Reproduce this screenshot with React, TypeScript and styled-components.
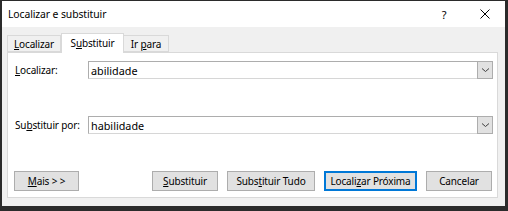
import styled, { createGlobalStyle } from 'styled-components';

const GlobalStyle = createGlobalStyle`
    html, body {
        margin: 0;
        padding: 0;
        background: #2b2b2b;
    }
    * {
        box-sizing: border-box;
    }
`;

const Dialog = styled.div`
    width: 508px;
    height: 211px;
    display: flex;
    flex-direction: column;
    border-style: solid;
    border-color: #2b2b2b;
    border-width: 1px 3px 5px 2px;
    font-family: "Noto Sans", "Open Sans", sans-serif;
    font-size: 10px;
    letter-spacing: -0.15px;
    color: #000;
`;

const TitleBar = styled.div`
    height: 26px;
    background: #fff;
    display: flex;
    align-items: center;
    padding-left: 6px;
`;

const Title = styled.div`
    flex: 1;
    font-size: 10.4px;
    letter-spacing: -0.1px;
`;

const TitleButton = styled.div<{ $width: number }>`
    width: ${p => p.$width}px;
    height: 26px;
    display: flex;
    align-items: center;
    justify-content: center;
    font-size: 11px;
`;

const Body = styled.div`
    flex: 1;
    background: #f0f0f0;
    padding: 6px 7px 8px 5px;
    display: flex;
    flex-direction: column;
`;

const TabRow = styled.div`
    display: flex;
    align-items: flex-end;
    height: 19px;
    position: relative;
    z-index: 1;
`;

const Tab = styled.div<{ $width: number; $active?: boolean; $noLeft?: boolean }>`
    width: ${p => p.$width}px;
    height: ${p => (p.$active ? 20 : 17)}px;
    margin-bottom: ${p => (p.$active ? -1 : 0)}px;
    background: ${p => (p.$active ? '#fff' : '#f0f0f0')};
    border: 1px solid #d9d9d9;
    border-bottom: ${p => (p.$active ? 'none' : '1px solid #d9d9d9')};
    border-left-width: ${p => (p.$noLeft ? 0 : 1)}px;
    display: flex;
    align-items: center;
    justify-content: center;
    padding-bottom: ${p => (p.$active ? 2 : 0)}px;
    white-space: pre;
`;

const Panel = styled.div`
    flex: 1;
    background: #fff;
    border: 1px solid #d9d9d9;
    padding: 8px 4px 6px 6px;
    display: flex;
    flex-direction: column;
`;

const FieldRow = styled.div<{ $top: number }>`
    display: flex;
    align-items: center;
    margin-top: ${p => p.$top}px;
`;

const Label = styled.div`
    width: 74px;
    padding-left: 1px;
    white-space: pre;
`;

const Combo = styled.div`
    flex: 1;
    height: 18px;
    display: flex;
    border: 1px solid #adadad;
    border-bottom-color: #d6d6d6;
    background: #fff;
`;

const ComboText = styled.div`
    flex: 1;
    display: flex;
    align-items: center;
    padding-left: 2px;
    font-size: 10.8px;
    letter-spacing: 0;
`;

const ComboButton = styled.div`
    width: 16px;
    margin: -1px -1px -1px 0;
    background: #e1e1e1;
    border: 1px solid #adadad;
    display: flex;
    align-items: center;
    justify-content: center;
`;

const ButtonRow = styled.div`
    margin-top: auto;
    margin-right: 1px;
    display: flex;
    gap: 9px;
`;

const Spacer = styled.div`
    flex: 1;
`;

const Button = styled.div<{ $width: number; $focus?: boolean }>`
    width: ${p => p.$width}px;
    height: 20px;
    background: #e1e1e1;
    border: ${p => (p.$focus ? '2px solid #0078d7' : '1px solid #adadad')};
    display: flex;
    align-items: center;
    justify-content: center;
    white-space: pre;
`;

const U = styled.u`
    text-decoration-thickness: 1px;
    text-underline-offset: 1px;
`;

const Chevron = () => (
    <svg width="9" height="6" viewBox="0 0 9 6">
        <polyline points="1,1.5 4.5,4.5 8,1.5" fill="none" stroke="#404040" strokeWidth="1" />
    </svg>
);

const CloseIcon = () => (
    <svg width="10" height="10" viewBox="0 0 10 10">
        <path d="M0.5 0.5 L9.5 9.5 M9.5 0.5 L0.5 9.5" stroke="#000" strokeWidth="1" />
    </svg>
);

const tabs = [
    { pre: '', key: 'L', post: 'ocalizar', width: 54 },
    { pre: 'S', key: 'u', post: 'bstituir', width: 63, active: true },
    { pre: 'Ir ', key: 'p', post: 'ara', width: 45, noLeft: true },
];

const buttons = [
    { pre: '', key: 'S', post: 'ubstituir', width: 66 },
    { pre: 'Subs', key: 't', post: 'ituir Tudo', width: 88 },
    { pre: 'Locali', key: 'z', post: 'ar Próxima', width: 93, focus: true },
];

const App = () => {
    return (
        <Dialog>
            <GlobalStyle />
            <TitleBar>
                <Title>Localizar e substituir</Title>
                <TitleButton $width={50}>?</TitleButton>
                <TitleButton $width={32}>
                    <CloseIcon />
                </TitleButton>
                <TitleButton $width={4} />
            </TitleBar>
            <Body>
                <TabRow>
                    {tabs.map(t => (
                        <Tab key={t.post} $width={t.width} $active={t.active} $noLeft={t.noLeft}>
                            <span>{t.pre}<U>{t.key}</U>{t.post}</span>
                        </Tab>
                    ))}
                </TabRow>
                <Panel>
                    <FieldRow $top={0}>
                        <Label><span><U>L</U>ocalizar:</span></Label>
                        <Combo>
                            <ComboText>abilidade</ComboText>
                            <ComboButton><Chevron /></ComboButton>
                        </Combo>
                    </FieldRow>
                    <FieldRow $top={37}>
                        <Label><span>Su<U>b</U>stituir por:</span></Label>
                        <Combo>
                            <ComboText>habilidade</ComboText>
                            <ComboButton><Chevron /></ComboButton>
                        </Combo>
                    </FieldRow>
                    <ButtonRow>
                        <Button $width={65}><span><U>M</U>ais &gt; &gt;</span></Button>
                        <Spacer />
                        {buttons.map(b => (
                            <Button key={b.post} $width={b.width} $focus={b.focus}>
                                <span>{b.pre}<U>{b.key}</U>{b.post}</span>
                            </Button>
                        ))}
                        <Button $width={66}>Cancelar</Button>
                    </ButtonRow>
                </Panel>
            </Body>
        </Dialog>
    );
};

export default App;
